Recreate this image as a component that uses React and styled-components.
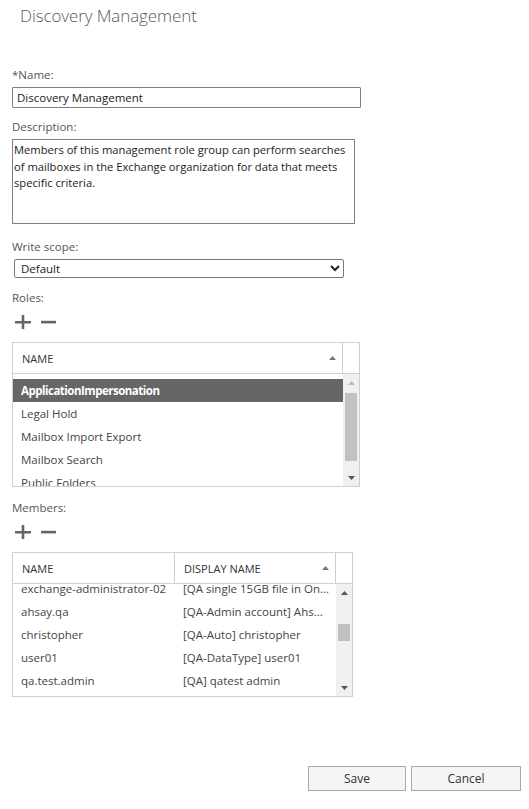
import React from 'react'
import styled, { createGlobalStyle } from 'styled-components'

const roles = ['ApplicationImpersonation', 'Legal Hold', 'Mailbox Import Export', 'Mailbox Search', 'Public Folders']

const members = [
    ['exchange-administrator-02', '[QA single 15GB file in On...'],
    ['ahsay.qa', '[QA-Admin account] Ahs...'],
    ['christopher', '[QA-Auto] christopher'],
    ['user01', '[QA-DataType] user01'],
    ['qa.test.admin', '[QA] qatest admin'],
]

const Arrow = ({ down, color }) => (
    <svg width="7" height="4" viewBox="0 0 7 4">
        <path d={down ? 'M0 0H7L3.5 4Z' : 'M0 4H7L3.5 0Z'} fill={color} />
    </svg>
)

const AddRemove = () => (
    <Tools>
        <svg width="16" height="14" viewBox="0 0 16 14">
            <path d="M0 6h16v2.6H0zM6.7 0h2.6v14H6.7z" fill="#666" />
        </svg>
        <svg width="15" height="14" viewBox="0 0 15 14">
            <path d="M0 5.8h15v2.6H0z" fill="#666" />
        </svg>
    </Tools>
)

const App = () => {
    return (
        <Container>
            <GlobalStyle />
            <Title>Discovery Management</Title>
            <Form>
                <Label>*Name:</Label>
                <Input defaultValue="Discovery Management" />

                <Label $top={11}>Description:</Label>
                <TextArea defaultValue="Members of this management role group can perform searches of mailboxes in the Exchange organization for data that meets specific criteria." />

                <Label $top={15}>Write scope:</Label>
                <Select defaultValue="Default">
                    <option>Default</option>
                </Select>

                <Label $top={12}>Roles:</Label>
                <AddRemove />
                <Grid $width={348}>
                    <HeadRow>
                        <HeadCell $width={330}>
                            NAME
                            <Arrow color="#6b7a6f" />
                        </HeadCell>
                        <HeadSpacer />
                    </HeadRow>
                    <Body $height={112}>
                        <List $offset={5}>
                            {roles.map((r, i) => (
                                <Row key={r} $selected={i === 0}>
                                    <Cell $width={330}>{r}</Cell>
                                </Row>
                            ))}
                        </List>
                        <ScrollBar>
                            <ScrollBtn><Arrow color="#bbb" /></ScrollBtn>
                            <Track>
                                <Thumb style={{ top: 2, height: 68 }} />
                            </Track>
                            <ScrollBtn><Arrow down color="#555" /></ScrollBtn>
                        </ScrollBar>
                    </Body>
                </Grid>

                <Label $top={13}>Members:</Label>
                <AddRemove />
                <Grid $width={341}>
                    <HeadRow>
                        <HeadCell $width={162}>NAME</HeadCell>
                        <HeadCell $width={161}>
                            DISPLAY NAME
                            <Arrow color="#777" />
                        </HeadCell>
                        <HeadSpacer />
                    </HeadRow>
                    <Body $height={112}>
                        <List $offset={-7}>
                            {members.map(([n, d]) => (
                                <Row key={n}>
                                    <Cell $width={162}>{n}</Cell>
                                    <Cell $width={161}>{d}</Cell>
                                </Row>
                            ))}
                        </List>
                        <ScrollBar>
                            <ScrollBtn><Arrow color="#555" /></ScrollBtn>
                            <Track>
                                <Thumb style={{ top: 23, height: 17 }} />
                            </Track>
                            <ScrollBtn><Arrow down color="#555" /></ScrollBtn>
                        </ScrollBar>
                    </Body>
                </Grid>
            </Form>
            <Footer>
                <Button $width={98}>Save</Button>
                <Button $width={110}>Cancel</Button>
            </Footer>
        </Container>
    )
}

export default App

const GlobalStyle = createGlobalStyle`
    body {
        margin: 0;
        background: #fff;
        font-family: "Open Sans", "Liberation Sans", sans-serif;
        color: #333;
    }
`
const Container = styled.div`
    width: 529px;
    height: 809px;
    display: flex;
    flex-direction: column;
    box-sizing: border-box;
`
const Title = styled.div`
    padding: 4px 0 0 20px;
    height: 26px;
    font-size: 17px;
    font-weight: 300;
    color: #5a5a5a;
    letter-spacing: -0.1px;
`
const Form = styled.div`
    display: flex;
    flex-direction: column;
    align-items: flex-start;
    padding: 37px 0 0 12px;
`
const Label = styled.div`
    margin-top: ${p => p.$top || 0}px;
    height: 20px;
    line-height: 16px;
    font-size: 11.5px;
    color: #555;
`
const fieldText = `
    font-family: "Open Sans", "Liberation Sans", sans-serif;
    font-size: 11.5px;
    color: #222;
    box-sizing: border-box;
    outline: none;
`
const Input = styled.input`
    ${fieldText}
    width: 349px;
    height: 21px;
    border: 1px solid #808080;
    border-radius: 1px;
    padding: 0 4px;
    margin: 0;
`
const TextArea = styled.textarea`
    ${fieldText}
    font-size: 11.2px;
    width: 343px;
    height: 85px;
    border: 1px solid #808080;
    padding: 2px 3px 2px 1px;
    margin: 0;
    resize: none;
    line-height: 16.5px;
`
const Select = styled.select`
    ${fieldText}
    width: 330px;
    height: 19px;
    margin: 0 0 0 2px;
    border: 1px solid #7a7a7a;
    border-radius: 2px;
    padding: 0 2px;
    background: #fff;
`
const Tools = styled.div`
    display: flex;
    align-items: center;
    gap: 10px;
    height: 24px;
    padding-left: 3px;
    margin-bottom: 8px;
`
const Grid = styled.div`
    width: ${p => p.$width}px;
    border: 1px solid #cfcfcf;
    box-sizing: border-box;
    background: #fff;
`
const HeadRow = styled.div`
    display: flex;
    height: 31px;
    border-bottom: 1px solid #cfcfcf;
    box-sizing: border-box;
`
const HeadCell = styled.div`
    width: ${p => p.$width}px;
    display: flex;
    align-items: center;
    justify-content: space-between;
    padding: 0 6px 0 9px;
    box-sizing: border-box;
    font-size: 11px;
    color: #333;
    border-right: 1px solid #cfcfcf;
`
const HeadSpacer = styled.div`
    flex: 1;
`
const Body = styled.div`
    display: flex;
    height: ${p => p.$height}px;
    overflow: hidden;
`
const List = styled.div`
    flex: 1;
    margin-top: ${p => p.$offset}px;
`
const Row = styled.div`
    display: flex;
    height: 23px;
    align-items: center;
    background: ${p => (p.$selected ? '#666' : 'transparent')};
    color: ${p => (p.$selected ? '#fff' : '#444')};
    font-weight: ${p => (p.$selected ? 700 : 400)};
    letter-spacing: ${p => (p.$selected ? '-0.5px' : '0')};
    font-size: 11.5px;
`
const Cell = styled.div`
    width: ${p => p.$width}px;
    padding-left: 8px;
    box-sizing: border-box;
    white-space: nowrap;
    overflow: hidden;
`
const ScrollBar = styled.div`
    width: 18px;
    background: #f0f0f0;
    display: flex;
    flex-direction: column;
`
const ScrollBtn = styled.div`
    height: 17px;
    display: flex;
    align-items: center;
    justify-content: center;
`
const Track = styled.div`
    flex: 1;
    position: relative;
`
const Thumb = styled.div`
    position: absolute;
    left: 2px;
    right: 2px;
    background: #c1c1c1;
`
const Footer = styled.div`
    margin-top: auto;
    display: flex;
    justify-content: flex-end;
    gap: 5px;
    padding: 0 8px 18px 0;
`
const Button = styled.button`
    width: ${p => p.$width}px;
    height: 25px;
    border: 1px solid #a3abae;
    background: #f5f5f5;
    font-family: "Open Sans", "Liberation Sans", sans-serif;
    font-size: 12px;
    color: #333;
    padding: 0;
`
